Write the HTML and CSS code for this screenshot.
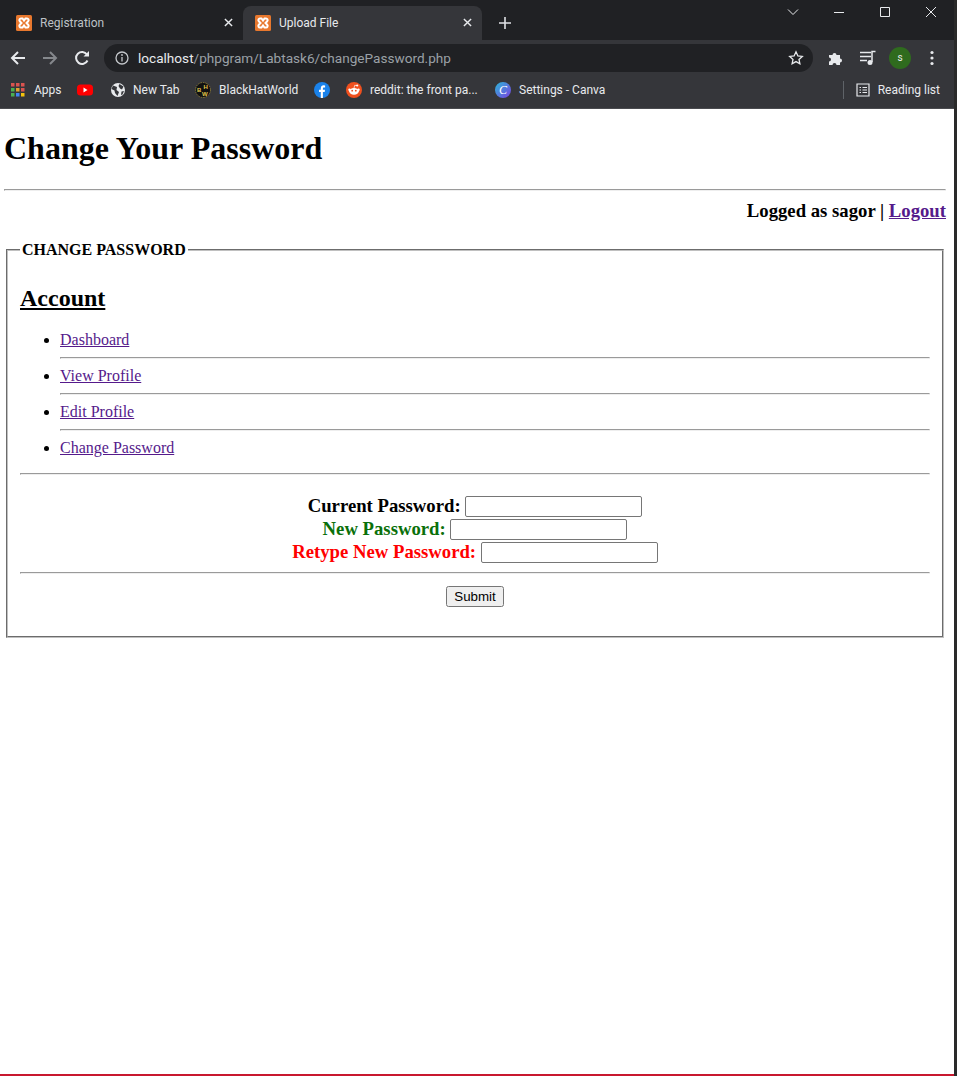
FILE: index.html
```html
<!DOCTYPE html>
<html>

<head>
	<meta charset="utf-8">
	<title>Change Your Password</title>
	<link rel="stylesheet" href="styles.css">
</head>

<body>
	<svg class="defs" width="0" height="0">
		<symbol id="xampp" viewBox="0 0 16 16">
			<rect width="16" height="16" rx="1.5" fill="#e8782e" />
			<path d="M5 3.5h1.5L8 5.5l1.5-2H11a1.6 1.6 0 0 1 1.2 2.7L10.5 8l1.700 1.800A1.600 1.600 0 0 1 11 12.500H9.500L8 10.500l-1.500 2H5a1.600 1.600 0 0 1-1.200-2.700L5.500 8 3.800 6.200A1.600 1.600 0 0 1 5 3.500z" fill="none" stroke="#fff" stroke-width="2" />
		</symbol>
	</svg>

	<div class="window">
		<div class="tabstrip">
			<div class="tab">
				<svg class="icon16"><use href="#xampp" /></svg>
				<span class="tab-title">Registration</span>
				<svg class="tab-close" viewBox="0 0 10 10"><path d="M1 1l8 8M9 1l-8 8" /></svg>
			</div>
			<div class="tab tab-active">
				<svg class="icon16"><use href="#xampp" /></svg>
				<span class="tab-title">Upload File</span>
				<svg class="tab-close" viewBox="0 0 10 10"><path d="M1 1l8 8M9 1l-8 8" /></svg>
			</div>
			<svg class="new-tab" viewBox="0 0 12 12"><path d="M6 0v12M0 6h12" /></svg>
			<div class="win-controls">
				<div class="win-btn"><svg width="12" height="8" viewBox="0 0 12 8"><path d="M1 1.500l5 5 5-5" /></svg></div>
				<div class="win-btn"><svg width="12" height="12" viewBox="0 0 12 12"><path d="M1 6.500h10" /></svg></div>
				<div class="win-btn"><svg width="12" height="12" viewBox="0 0 12 12"><path d="M1.500 1.500h9v9h-9z" /></svg></div>
				<div class="win-btn"><svg width="12" height="12" viewBox="0 0 12 12"><path d="M1 1l10 10M11 1L1 11" /></svg></div>
			</div>
		</div>

		<div class="toolbar">
			<div class="tool-btn"><svg width="16" height="16" viewBox="0 0 16 16"><path class="nav" d="M15 8H2M8 2L2 8l6 6" /></svg></div>
			<div class="tool-btn"><svg width="16" height="16" viewBox="0 0 16 16"><path class="nav nav-off" d="M1 8h13M8 2l6 6-6 6" /></svg></div>
			<div class="tool-btn"><svg width="16" height="16" viewBox="0 0 16 16"><path class="nav" d="M13.500 10.500A6 6 0 1 1 13 4.500" /><path class="solid" d="M15 1v5.500H9.500z" /></svg></div>
			<div class="omnibox">
				<svg width="14" height="14" viewBox="0 0 14 14"><circle class="info" cx="7" cy="7" r="6" /><path class="info" d="M7 6v4.500" /><circle class="dot" cx="7" cy="4" r="0.900" /></svg>
				<span class="url"><span class="url-host">localhost</span>/phpgram/Labtask6/changePassword.php</span>
				<svg class="star" width="16" height="16" viewBox="0 0 16 16"><path d="M8 1.800l1.900 4.100 4.400.500-3.300 3 .9 4.400L8 11.600l-3.900 2.200.9-4.400-3.300-3 4.400-.500z" /></svg>
			</div>
			<div class="tool-btn tool-first"><svg width="16" height="16" viewBox="0 0 16 16"><path class="solid" d="M1 5h3.500a2 2 0 1 1 4 0H12v3.500a2 2 0 1 1 0 4V15H8.500a2 2 0 1 0-4 0H1v-3.500a2 2 0 1 0 0-4z" /></svg></div>
			<div class="tool-btn"><svg width="18" height="16" viewBox="0 0 18 16"><path class="queue" d="M1 2.500h11M1 6.500h11M1 10.500h7M13 12V1.500h3.500" /><circle class="solid" cx="11" cy="12.500" r="2.500" /></svg></div>
			<div class="tool-btn"><span class="avatar">s</span></div>
			<div class="tool-btn"><svg width="4" height="16" viewBox="0 0 4 16"><circle class="solid" cx="2" cy="2.500" r="1.600" /><circle class="solid" cx="2" cy="8" r="1.600" /><circle class="solid" cx="2" cy="13.500" r="1.600" /></svg></div>
		</div>

		<div class="bookmarks">
			<div class="bm bm-apps">
				<svg class="icon-apps" viewBox="0 0 14 14">
					<rect x="0" y="0" width="3.500" height="3.500" fill="#d9534f" /><rect x="5" y="0" width="3.500" height="3.500" fill="#d9534f" /><rect x="10" y="0" width="3.500" height="3.500" fill="#d9534f" />
					<rect x="0" y="5" width="3.500" height="3.500" fill="#4caf50" /><rect x="5" y="5" width="3.500" height="3.500" fill="#e0a030" /><rect x="10" y="5" width="3.500" height="3.500" fill="#d9534f" />
					<rect x="0" y="10" width="3.500" height="3.500" fill="#4caf50" /><rect x="5" y="10" width="3.500" height="3.500" fill="#4285f4" /><rect x="10" y="10" width="3.500" height="3.500" fill="#f4c20d" />
				</svg>
				<span>Apps</span>
			</div>
			<div class="bm bm-yt">
				<svg class="icon16" viewBox="0 0 16 16"><rect x="0" y="2.500" width="16" height="11" rx="3.500" fill="#f00" /><path d="M6.500 5.500L10.500 8l-4 2.500z" fill="#fff" /></svg>
			</div>
			<div class="bm bm-newtab">
				<svg class="icon16" viewBox="0 0 16 16"><circle cx="8" cy="8" r="7" fill="#e8eaed" /><path d="M3 3.500L7 5 6.500 8 9 10 7.500 14 5 11 4.500 8.500 1.500 7zM9.500 2l4 2.500L12 7.500l-2-1L8.500 4zM11.500 9.500l2.500-.5-1.500 3.500-1.500.5z" fill="#35363a" /></svg>
				<span>New Tab</span>
			</div>
			<div class="bm bm-bhw">
				<svg class="icon16" viewBox="0 0 16 16">
					<circle cx="8" cy="8" r="7.500" fill="#111" stroke="#8a7a3a" stroke-dasharray="1.500 1" />
					<text class="bhw-text" x="2" y="9.500">B</text><text class="bhw-text" x="8.500" y="6.500">H</text><text class="bhw-text" x="7" y="14">W</text>
				</svg>
				<span>BlackHatWorld</span>
			</div>
			<div class="bm bm-fb">
				<svg class="icon16" viewBox="0 0 16 16"><circle cx="8" cy="8" r="8" fill="#1a82ea" /><path d="M6.800 16V10H5V7.800h1.800V6.200C6.800 4.300 8 3.300 9.600 3.300l1.500.1v2H10c-.9 0-1.100.5-1.100 1.100v1.300h2.100l-.3 2.200H8.900v6z" fill="#fff" /></svg>
			</div>
			<div class="bm bm-reddit">
				<svg class="icon16" viewBox="0 0 16 16"><circle cx="8" cy="8" r="8" fill="#f0501e" /><ellipse cx="8" cy="9.300" rx="4.800" ry="3.400" fill="#fff" /><circle cx="3.500" cy="7.800" r="1.200" fill="#fff" /><circle cx="12.500" cy="7.800" r="1.200" fill="#fff" /><circle cx="11.200" cy="3.500" r="1.100" fill="#fff" /><path d="M8 6l.7-2.700 2.500.3" fill="none" stroke="#fff" stroke-width="0.700" /><circle cx="6.200" cy="8.700" r="0.900" fill="#f0501e" /><circle cx="9.800" cy="8.700" r="0.900" fill="#f0501e" /></svg>
				<span>reddit: the front pa...</span>
			</div>
			<div class="bm bm-canva">
				<svg class="icon16" viewBox="0 0 16 16">
					<defs><linearGradient id="canva" x1="0" y1="0" x2="1" y2="1"><stop offset="0" stop-color="#2bb8d8" /><stop offset="1" stop-color="#7a3fe0" /></linearGradient></defs>
					<circle cx="8" cy="8" r="8" fill="url(#canva)" /><text class="canva-text" x="8" y="12">C</text>
				</svg>
				<span>Settings - Canva</span>
			</div>
			<div class="bm-reading">
				<svg class="icon-list" viewBox="0 0 14 14"><path d="M1 1h12v12H1zM3.500 4.500h1.500M6.500 4.500h4.500M3.500 7h1.500M6.500 7h4.500M3.500 9.500h1.500M6.500 9.500h4.500" /></svg>
				<span>Reading list</span>
			</div>
		</div>

		<div class="page">
			<h1>Change Your Password</h1>
			<hr>
			<div class="logged">Logged as sagor | <a href="#">Logout</a></div>
			<fieldset>
				<legend>CHANGE PASSWORD</legend>
				<h2>Account</h2>
				<ul>
					<li><a href="#">Dashboard</a><hr></li>
					<li><a href="#">View Profile</a><hr></li>
					<li><a href="#">Edit Profile</a><hr></li>
					<li><a href="#">Change Password</a></li>
				</ul>
				<hr>
				<form class="pass-form">
					<div class="pass-row">Current Password: <input type="password"></div>
					<div class="pass-row green">New Password: <input type="password"></div>
					<div class="pass-row red">Retype New Password: <input type="password"></div>
				</form>
				<hr>
				<div class="submit-row"><input type="button" value="Submit"></div>
			</fieldset>
		</div>
	</div>
</body>

</html>
```

FILE: styles.css
```css
html, body {
	margin: 0;
	height: 100%;
	background-color: #2a2a2a;
	overflow: hidden;
}

.defs {
	display: block;
	height: 0;
}

.window {
	width: 954px;
	height: 1076px;
	display: flex;
	flex-direction: column;
	font-family: Roboto, sans-serif;
	font-size: 12px;
	color: #e8eaed;
}

.icon16 {
	width: 16px;
	height: 16px;
	flex: none;
}

/* tabs */
.tabstrip {
	height: 40px;
	flex: none;
	display: flex;
	padding-left: 4px;
	background-color: #202124;
}

.tab {
	width: 239px;
	margin-top: 6px;
	padding: 0 8px 1px 12px;
	box-sizing: border-box;
	display: flex;
	align-items: center;
	gap: 8px;
	color: #bdc1c6;
	border-radius: 8px 8px 0 0;
}

.tab-active {
	background-color: #35363a;
	color: #e8eaed;
}

.tab-title {
	flex: 1;
}

.tab-close {
	width: 9px;
	height: 9px;
	margin-right: 2px;
}

.tab-close path {
	fill: none;
	stroke: #e8eaed;
	stroke-width: 1.600;
}

.new-tab {
	width: 12px;
	height: 12px;
	margin: 17px 0 0 17px;
}

.new-tab path {
	fill: none;
	stroke: #dfe1e5;
	stroke-width: 1.600;
}

.win-controls {
	margin-left: auto;
	display: flex;
	height: 24px;
}

.win-btn {
	width: 46px;
	display: flex;
	align-items: center;
	justify-content: center;
}

.win-btn path {
	fill: none;
	stroke: #e8eaed;
	stroke-width: 1;
}

/* toolbar */
.toolbar {
	height: 36px;
	flex: none;
	display: flex;
	align-items: center;
	padding: 0 6px 0 2px;
	background-color: #35363a;
}

.tool-btn {
	width: 32px;
	height: 28px;
	flex: none;
	display: flex;
	align-items: center;
	justify-content: center;
}

.tool-first {
	margin-left: 7px;
}

.nav {
	fill: none;
	stroke: #e8eaed;
	stroke-width: 2;
}

.nav-off {
	stroke: #85888c;
}

.solid {
	fill: #e8eaed;
}

.queue {
	fill: none;
	stroke: #e8eaed;
	stroke-width: 1.500;
}

.avatar {
	width: 22px;
	height: 22px;
	border-radius: 50%;
	background-color: #2f6b1e;
	color: #e8eaed;
	font-size: 10px;
	line-height: 22px;
	text-align: center;
}

.omnibox {
	width: 709px;
	height: 28px;
	margin-left: 6px;
	padding: 0 9px 0 11px;
	box-sizing: border-box;
	flex: none;
	display: flex;
	align-items: center;
	background-color: #202124;
	border-radius: 14px;
}

.info {
	fill: none;
	stroke: #c4c7cb;
	stroke-width: 1.300;
}

.dot {
	fill: #c4c7cb;
}

.url {
	margin-left: 9px;
	flex: 1;
	font-size: 13.600px;
	color: #9aa0a6;
}

.url-host {
	color: #e8eaed;
}

.star path {
	fill: none;
	stroke: #e8eaed;
	stroke-width: 1.300;
}

/* bookmarks */
.bookmarks {
	height: 33px;
	flex: none;
	display: flex;
	align-items: center;
	padding: 0 14px 4px 11px;
	box-sizing: border-box;
	background-color: #35363a;
	border-bottom: 1px solid #4a4b4f;
}

.bm {
	display: flex;
	align-items: center;
	gap: 8px;
	flex: none;
}

.bm span {
	white-space: nowrap;
}

.icon-apps {
	width: 14px;
	height: 14px;
	margin-right: 1px;
	flex: none;
}

.bm-apps { width: 66px; }
.bm-yt { width: 33px; }
.bm-newtab { width: 85px; gap: 7px; }
.bm-bhw { width: 119px; }
.bm-fb { width: 32px; }
.bm-reddit { width: 149px; }

.bhw-text {
	font-family: "Liberation Sans", sans-serif;
	font-size: 6px;
	font-weight: bold;
	fill: #e5c84a;
}

.canva-text {
	font-family: "Liberation Serif", serif;
	font-size: 12px;
	font-style: italic;
	fill: #fff;
	text-anchor: middle;
}

.bm-reading {
	margin-left: auto;
	padding-left: 12px;
	display: flex;
	align-items: center;
	gap: 8px;
	height: 18px;
	border-left: 1px solid #5f6368;
}

.icon-list {
	width: 14px;
	height: 14px;
}

.icon-list path {
	fill: none;
	stroke: #e8eaed;
	stroke-width: 1.200;
}

/* page */
.page {
	flex: 1;
	padding: 0 8px 0 4px;
	overflow: hidden;
	background-color: #FFFFFF;
	border-bottom: 2px solid #c8182f;
	font-family: "Liberation Serif", serif;
	font-size: 16px;
	color: #000000;
}

.logged {
	margin-bottom: 19px;
	padding-top: 1px;
	text-align: right;
	font-size: 18.720px;
	font-weight: bold;
}

a {
	color: #551A8B;
}

fieldset {
	margin: 0 2px;
	padding: 0 12px 29px;
	border: 2px groove #c0c0c0;
}

legend {
	padding: 0 2px;
	font-weight: bold;
}

h2 {
	margin: 26px 0 19px;
	text-decoration: underline;
}

ul {
	margin: 19px 0 16px;
}

.pass-form {
	padding-top: 12px;
	text-align: center;
}

.pass-row {
	height: 23px;
	font-size: 18.720px;
	font-weight: bold;
}

.pass-row input {
	width: 177px;
	height: 21px;
	box-sizing: border-box;
	border: 1px solid #767676;
	border-radius: 2px;
	vertical-align: 1px;
}

.green {
	color: #0a700a;
}

.red {
	color: red;
}

.submit-row {
	padding-top: 4px;
	text-align: center;
}
```
